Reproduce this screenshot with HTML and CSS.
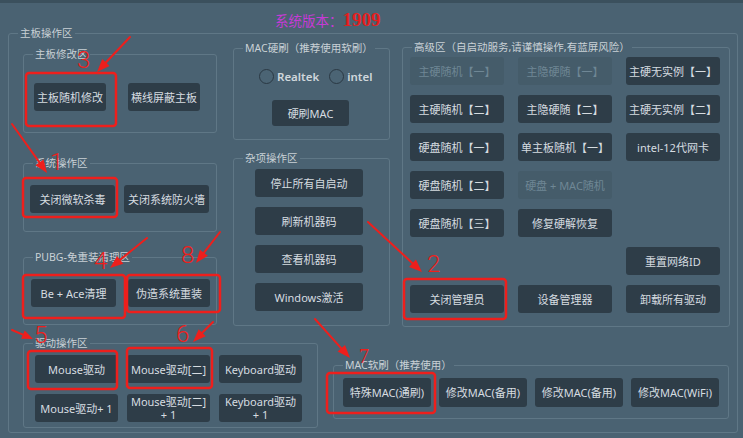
FILE: index.html
```html
<!DOCTYPE html>
<html lang="zh-CN">
<head>
<meta charset="utf-8">
<title>系统版本</title>
<link rel="stylesheet" href="styles.css">
</head>
<body>
<header class="header">
  <h1 class="title"><span class="title-label">系统版本：</span><span class="title-num">1909</span></h1>
</header>
<section class="frame">
  <span class="legend">主板操作区</span>
  <div class="top-row">
    <div class="col-left">
      <div class="group g-board">
        <span class="legend">主板修改区</span>
        <div class="btn-row">
          <button class="btn w72">主板随机修改</button>
          <button class="btn w72">横线屏蔽主板</button>
        </div>
      </div>
      <div class="group g-sys">
        <span class="legend">系统操作区</span>
        <div class="btn-row">
          <button class="btn w85">关闭微软杀毒</button>
          <button class="btn w85">关闭系统防火墙</button>
        </div>
      </div>
      <div class="group g-pubg">
        <span class="legend">PUBG-免重装清理区</span>
        <div class="btn-row">
          <button class="btn w85">Be + Ace清理</button>
          <button class="btn w82">伪造系统重装</button>
        </div>
      </div>
    </div>
    <div class="col-mid">
      <div class="group g-mach">
        <span class="legend">MAC硬刷（推荐使用软刷）</span>
        <div class="radios">
          <label class="radio-item"><span class="radio"></span>Realtek</label>
          <label class="radio-item"><span class="radio"></span>intel</label>
        </div>
        <button class="btn btn-mac">硬刷MAC</button>
      </div>
      <div class="group g-misc">
        <span class="legend">杂项操作区</span>
        <div class="btn-stack">
          <button class="btn">停止所有自启动</button>
          <button class="btn">刷新机器码</button>
          <button class="btn">查看机器码</button>
          <button class="btn">Windows激活</button>
        </div>
      </div>
    </div>
    <div class="col-right">
      <div class="group g-adv">
        <span class="legend">高级区（自启动服务,请谨慎操作,有蓝屏风险）</span>
        <div class="adv-grid">
          <button class="btn disabled">主硬随机【一】</button>
          <button class="btn disabled">主隐硬随【一】</button>
          <button class="btn">主硬无实例【一】</button>
          <button class="btn">主硬随机【二】</button>
          <button class="btn">主隐硬随【二】</button>
          <button class="btn">主硬无实例【二】</button>
          <button class="btn">硬盘随机【一】</button>
          <button class="btn">单主板随机【一】</button>
          <button class="btn">intel-12代网卡</button>
          <button class="btn">硬盘随机【二】</button>
          <button class="btn disabled">硬盘 + MAC随机</button>
          <span></span>
          <button class="btn">硬盘随机【三】</button>
          <button class="btn">修复硬解恢复</button>
          <span></span>
          <span></span>
          <span></span>
          <button class="btn">重置网络ID</button>
          <button class="btn">关闭管理员</button>
          <button class="btn">设备管理器</button>
          <button class="btn">卸载所有驱动</button>
        </div>
      </div>
    </div>
  </div>
  <div class="bottom-row">
    <div class="group g-drive">
      <span class="legend">驱动操作区</span>
      <div class="drive-grid">
        <button class="btn">Mouse驱动</button>
        <button class="btn">Mouse驱动[二]</button>
        <button class="btn">Keyboard驱动</button>
        <button class="btn">Mouse驱动+ 1</button>
        <button class="btn">Mouse驱动[二]<br>+ 1</button>
        <button class="btn">Keyboard驱动<br>+ 1</button>
      </div>
    </div>
    <div class="group g-macs">
      <span class="legend">MAC软刷（推荐使用）</span>
      <div class="macs-row">
        <button class="btn">特殊MAC(通刷)</button>
        <button class="btn">修改MAC(备用)</button>
        <button class="btn">修改MAC(备用)</button>
        <button class="btn">修改MAC(WiFi)</button>
      </div>
    </div>
  </div>
</section>

<svg class="annot" width="743" height="438" viewBox="0 0 743 438" xmlns="http://www.w3.org/2000/svg">
  <g fill="none" stroke="#ee1f1c" stroke-width="2.5">
    <rect x="26" y="73" width="90" height="53" rx="3"/>
    <rect x="23" y="178" width="94" height="39" rx="3"/>
    <rect x="23" y="275" width="102" height="43" rx="3"/>
    <rect x="127" y="275" width="93" height="37" rx="3"/>
    <rect x="28" y="351" width="89" height="38" rx="3"/>
    <rect x="127" y="348" width="85" height="40" rx="3"/>
    <rect x="404" y="279" width="102" height="40" rx="3"/>
    <rect x="327" y="373" width="108" height="40" rx="3"/>
  </g>
  <g stroke="#ee1f1c" stroke-width="2" stroke-linecap="round">
    <line x1="130" y1="37" x2="105.9" y2="62.5"/>
    <line x1="12" y1="124" x2="39.4" y2="162.4"/>
    <line x1="147" y1="238" x2="120.1" y2="259.8"/>
    <line x1="220" y1="232" x2="204" y2="252.7"/>
    <line x1="12" y1="330" x2="22.9" y2="334.7"/>
    <line x1="213" y1="322" x2="202.2" y2="332.8"/>
    <line x1="368" y1="222" x2="412.5" y2="263.2"/>
    <line x1="315" y1="319" x2="341.3" y2="348.3"/>
  </g>
  <g fill="#ee1f1c">
    <polygon points="97,72 102.3,59.1 109.5,65.9"/>
    <polygon points="47,173 35.4,165.3 43.5,159.5"/>
    <polygon points="110,268 117,255.9 123.3,263.7"/>
    <polygon points="196,263 200,249.7 207.9,255.8"/>
    <polygon points="33,339 21.1,338.8 24.7,330.6"/>
    <polygon points="193,342 198.7,329.3 205.7,336.3"/>
    <polygon points="422,272 409.1,266.9 415.9,259.5"/>
    <polygon points="350,358 337.6,351.6 345,345"/>
  </g>
  <g class="num" fill="#ee1f1c">
    <text x="77" y="68">3</text>
    <text x="50" y="170">1</text>
    <text x="94" y="269">4</text>
    <text x="181" y="263">8</text>
    <text x="34" y="343">5</text>
    <text x="176" y="342">6</text>
    <text x="427" y="272">2</text>
    <text class="num-serif" x="359" y="363">7</text>
  </g>
</svg>
</body>
</html>
```

FILE: styles.css
```css
* { box-sizing: border-box; }
html, body { margin: 0; padding: 0; }
body {
  width: 743px;
  height: 438px;
  overflow: hidden;
  position: relative;
  background: #4a6272;
  font-family: "Noto Sans", "Noto Sans CJK SC", sans-serif;
  color: #cbd3d8;
}

.header {
  height: 33px;
  border-top: 3px solid #3b505d;
  padding-left: 275px;
}
.title {
  margin: 0;
  line-height: 22px;
  font-weight: normal;
  white-space: nowrap;
}
.title-label {
  color: #c63ad6;
  font-size: 13.5px;
  font-family: "Noto Sans CJK SC", sans-serif;
}
.title-num {
  color: #e41e1e;
  font-size: 19px;
  font-weight: bold;
  font-family: "Liberation Serif", serif;
}

.frame {
  margin-left: 8px;
  width: 730px;
  height: 400px;
  border: 1px solid #5f7786;
  border-radius: 3px;
}
.group {
  border: 1px solid #5f7786;
  border-radius: 3px;
}
.legend {
  display: block;
  width: max-content;
  height: 15px;
  line-height: 15px;
  margin: -8px 0 0 9px;
  padding: 0 2px;
  background: #4a6272;
  font-size: 10.5px;
  color: #c9d1d6;
  white-space: nowrap;
}

.btn {
  display: block;
  height: 28px;
  border: 0;
  padding: 0;
  border-radius: 3px;
  background: #2e3d48;
  color: #d6dce0;
  font-family: "Noto Sans", "Noto Sans CJK SC", sans-serif;
  font-size: 11px;
  line-height: 13px;
  text-align: center;
  white-space: nowrap;
}
.btn.disabled {
  background: #455c6a;
  color: #6f8795;
}
.w72 { width: 72px; }
.w85 { width: 85px; }
.w82 { width: 82px; }

.top-row {
  display: flex;
  margin-top: 6px;
  padding-left: 14px;
}
.col-left {
  width: 194px;
  display: flex;
  flex-direction: column;
}
.btn-row { display: flex; }

.g-board { margin-top: 7px; height: 79px; }
.g-board .btn-row { margin: 21px 0 0 10px; gap: 22px; }

.g-sys { margin-top: 30px; height: 69px; }
.g-sys .btn-row { margin: 14px 0 0 6px; gap: 9px; }

.g-pubg { margin-top: 25px; height: 68px; }
.g-pubg .btn-row { margin: 14px 0 0 7px; gap: 12px; }

.col-mid {
  width: 157px;
  margin-left: 16px;
  display: flex;
  flex-direction: column;
}
.g-mach { margin-top: 1px; height: 92px; }
.radios {
  display: flex;
  gap: 10px;
  margin: 12px 0 0 25px;
  height: 16px;
}
.radio-item {
  display: flex;
  align-items: center;
  gap: 3px;
  font-size: 11.5px;
  font-weight: 600;
  color: #d0d7dc;
}
.radio {
  width: 15px;
  height: 15px;
  border-radius: 50%;
  border: 1px solid #2b3944;
  background: #4b6474;
}
.btn-mac {
  width: 77px;
  height: 26px;
  margin: 16px 0 0 38px;
}

.g-misc { margin-top: 18px; height: 168px; }
.btn-stack {
  display: flex;
  flex-direction: column;
  gap: 10px;
  margin: 3px 0 0 21px;
}
.btn-stack .btn { width: 108px; }

.col-right {
  width: 328px;
  margin-left: 12px;
}
.g-adv { height: 280px; }
.adv-grid {
  display: grid;
  grid-template-columns: repeat(3, 94px);
  grid-auto-rows: 28px;
  column-gap: 14px;
  row-gap: 10px;
  margin: 2px 0 0 7px;
}
.adv-grid .btn { width: 94px; }

.bottom-row {
  display: flex;
  align-items: flex-start;
  margin-top: 16px;
  padding-left: 14px;
}
.g-drive { width: 295px; height: 85px; }
.drive-grid {
  display: grid;
  grid-template-columns: repeat(3, 83px);
  grid-auto-rows: 28px;
  column-gap: 9px;
  row-gap: 11px;
  margin: 4px 0 0 11px;
}
.drive-grid .btn { width: 83px; }

.g-macs {
  width: 396px;
  height: 54px;
  margin: 22px 0 0 15px;
}
.macs-row {
  display: flex;
  gap: 8px;
  margin: 5px 0 0 9px;
}
.macs-row .btn { width: 88px; height: 29px; }

.annot {
  position: absolute;
  left: 0;
  top: 0;
  pointer-events: none;
}
.num text {
  font-family: Roboto, "Liberation Sans", sans-serif;
  font-weight: 300;
  font-size: 24px;
}
.num .num-serif {
  font-family: "Liberation Serif", serif;
  font-size: 20px;
}
```
